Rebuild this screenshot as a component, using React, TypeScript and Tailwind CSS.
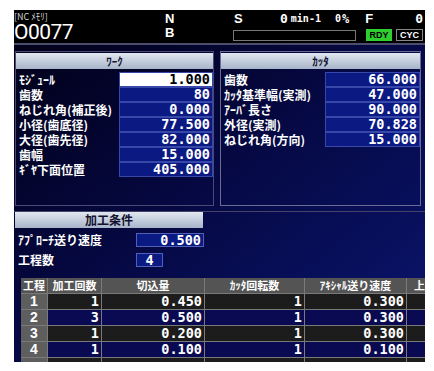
import React from "react";

const jp = "font-['Noto_Sans_CJK_JP',sans-serif]";
const mono = "font-['DejaVu_Sans_Mono',monospace]";

function ValueBox({ v, sel = false, w }: { v: string; sel?: boolean; w: string }) {
  return (
    <div
      className={`${w} h-[15px] shrink-0 flex items-center justify-end pr-[2px] border border-[#3848a8] ${
        sel ? "bg-white text-black" : "bg-[#0b1a82] text-white"
      } ${mono} font-bold text-[13.5px] leading-[13px]`}
    >
      {v}
    </div>
  );
}

function Row({ label, v, sel, w, lw }: { label: string; v: string; sel?: boolean; w: string; lw: string }) {
  return (
    <div className="flex h-[15px] items-center">
      <div className={`${lw} h-[15px] shrink-0 pl-[3px] text-white font-bold text-[12px] leading-[15px] whitespace-nowrap overflow-hidden ${jp}`}>
        {label}
      </div>
      <ValueBox v={v} sel={sel} w={w} />
    </div>
  );
}

function PanelHeader({ t, w = "w-full", size = "text-[11px]" }: { t: string; w?: string; size?: string }) {
  return (
    <div
      className={`${w} h-[16px] flex items-center justify-center bg-gradient-to-b from-[#e2e8f1] to-[#a7b4c9] text-[#121230] font-bold ${size} leading-[16px] ${jp}`}
    >
      {t}
    </div>
  );
}

const work = [
  ["ﾓｼﾞｭｰﾙ", "1.000"],
  ["歯数", "80"],
  ["ねじれ角(補正後)", "0.000"],
  ["小径(歯底径)", "77.500"],
  ["大径(歯先径)", "82.000"],
  ["歯幅", "15.000"],
  ["ｷﾞﾔ下面位置", "405.000"],
];

const cutter = [
  ["歯数", "66.000"],
  ["ｶｯﾀ基準幅(実測)", "47.000"],
  ["ｱｰﾊﾞ長さ", "90.000"],
  ["外径(実測)", "70.828"],
  ["ねじれ角(方向)", "15.000"],
];

const rows = [
  ["1", "1", "0.450", "1", "0.300"],
  ["2", "3", "0.500", "1", "0.300"],
  ["3", "1", "0.200", "1", "0.300"],
  ["4", "1", "0.100", "1", "0.100"],
  ["", "", "", "", ""],
];

const cols = "grid grid-cols-[27px_54px_103px_100px_102px_100px]";

export default function App() {
  return (
    <div className="w-[434px] h-[371px] bg-white overflow-hidden">
      <div className="ml-[14px] mt-[10px] w-[411px] h-[352px] overflow-hidden bg-black flex flex-col">
        {/* top status bar */}
        <div className="h-[33px] flex shrink-0 text-white">
          <div className="w-[151px] shrink-0 flex flex-col">
            <div className={`text-[9px] leading-[9px] text-[#d0d0d0] mt-[2px] whitespace-pre ${jp}`}>[NC ﾒﾓﾘ]</div>
            <div className="font-['Roboto',sans-serif] text-[21px] leading-[17px] tracking-[-0.5px] mt-[3px]">O0077</div>
          </div>
          <div className="w-[68px] shrink-0 flex flex-col font-bold text-[13px] leading-[14px] font-['Liberation_Sans',sans-serif]">
            <div className="mt-[2px]">N</div>
            <div>B</div>
          </div>
          <div className="w-[192px] shrink-0 min-w-0 overflow-hidden flex flex-col">
            <div className="h-[17px] flex items-center font-bold font-['Liberation_Sans',sans-serif] text-[13px] whitespace-nowrap">
              <span className="ml-[1px] w-[8px] shrink-0">S</span>
              <span className={`ml-[38px] shrink-0 ${mono}`}>0</span>
              <span className={`ml-[3px] shrink-0 text-[10px] ${mono}`}>min-1</span>
              <span className={`ml-[14px] shrink-0 text-[10px] ${mono}`}>0</span>
              <span className={`ml-[1px] shrink-0 ${mono} text-[12px]`}>%</span>
              <span className="ml-[16px] shrink-0">F</span>
              <span className={`ml-[42px] shrink-0 ${mono}`}>0.</span>
            </div>
            <div className="flex items-center mt-[2px]">
              <div className="w-[123px] shrink-0 h-[11px] border border-[#777] bg-black" />
              <div className="ml-[10px] shrink-0 w-[26px] h-[12px] bg-[#2fcf2f] text-black font-bold text-[9px] leading-[12px] text-center font-['Liberation_Sans',sans-serif]">
                RDY
              </div>
              <div className="ml-[4px] shrink-0 w-[27px] h-[12px] border border-[#888] text-white font-bold text-[9px] leading-[10px] text-center font-['Liberation_Sans',sans-serif]">
                CYC
              </div>
            </div>
          </div>
        </div>
        <div className="h-[2px] bg-[#4c4c6c] shrink-0" />

        {/* body */}
        <div className="flex-1 bg-gradient-to-br from-[#02021a] via-[#060a48] to-[#0b1672] flex flex-col">
          <div className="flex mt-[6px] ml-[1px] gap-[6px]">
            <div className="w-[199px] h-[155px] border border-[#4a4a74] pt-[1px]">
              <PanelHeader t="ﾜｰｸ" />
              <div className="mt-[3px] flex flex-col">
                {work.map(([l, v], i) => (
                  <Row key={i} label={l} v={v} sel={i === 0} w="w-[94px]" lw="w-[103px]" />
                ))}
              </div>
            </div>
            <div className="w-[201px] h-[155px] border border-[#6a6a94] pt-[1px]">
              <PanelHeader t="ｶｯﾀ" />
              <div className="mt-[3px] flex flex-col">
                {cutter.map(([l, v], i) => (
                  <Row key={i} label={l} v={v} w="w-[95px]" lw="w-[104px]" />
                ))}
              </div>
            </div>
          </div>

          <div className="mt-[5px] border-t border-[#44446a]">
            <div className="ml-[1px]">
              <PanelHeader t="加工条件" w="w-[188px]" size="text-[12px]" />
            </div>
          </div>

          <div className="flex items-center h-[14px] mt-[5px]">
            <div className={`w-[122px] pl-[4px] text-white font-bold text-[12px] whitespace-nowrap ${jp}`}>ｱﾌﾟﾛｰﾁ送り速度</div>
            <div className={`w-[68px] h-[14px] border border-[#5060b8] bg-[#0b1a82] text-white flex items-center justify-end pr-[2px] font-bold text-[13.5px] ${mono}`}>
              0.500
            </div>
          </div>
          <div className="flex items-center h-[14px] mt-[6px]">
            <div className={`w-[122px] pl-[4px] text-white font-bold text-[12px] whitespace-nowrap ${jp}`}>工程数</div>
            <div className={`w-[27px] h-[14px] border border-[#5060b8] bg-[#0b1a82] text-white flex items-center justify-center font-bold text-[13.5px] ${mono}`}>
              4
            </div>
          </div>

          {/* table */}
          <div className="mt-[11px] ml-[7px] w-[404px] overflow-hidden">
            <div className="w-[486px]">
              <div className={`${cols} h-[15px] bg-[#545454] text-white font-bold text-[11px] leading-[15px] ${jp}`}>
                <div className="text-center border-r border-[#7a7a7a]">工程</div>
                <div className="text-center border-r border-[#7a7a7a]">加工回数</div>
                <div className="text-center border-r border-[#7a7a7a]">切込量</div>
                <div className="text-center border-r border-[#7a7a7a]">ｶｯﾀ回転数</div>
                <div className="text-center border-r border-[#7a7a7a]">ｱｷｼｬﾙ送り速度</div>
                <div className="pl-[7px]">上昇</div>
              </div>
              {rows.map((r, i) => {
                const bg = i % 2 === 0 ? "bg-[#1c1c1c]" : "bg-[#0a0a52]";
                return (
                  <div key={i} className={`${cols} h-[16px] border-t border-[#7a7a7a]`}>
                    <div className="bg-[#5e5e5e] text-white text-center font-bold text-[14px] leading-[15px] font-['Liberation_Sans',sans-serif] border-r border-[#7a7a7a]">
                      {r[0]}
                    </div>
                    {[r[1], r[2], r[3], r[4], ""].map((c, j) => (
                      <div
                        key={j}
                        className={`${bg} text-white text-right pr-[2px] font-bold text-[13.5px] leading-[15px] ${mono} ${j < 4 ? "border-r border-[#7a7a7a]" : ""}`}
                      >
                        {c}
                      </div>
                    ))}
                  </div>
                );
              })}
            </div>
          </div>
        </div>
      </div>
    </div>
  );
}
